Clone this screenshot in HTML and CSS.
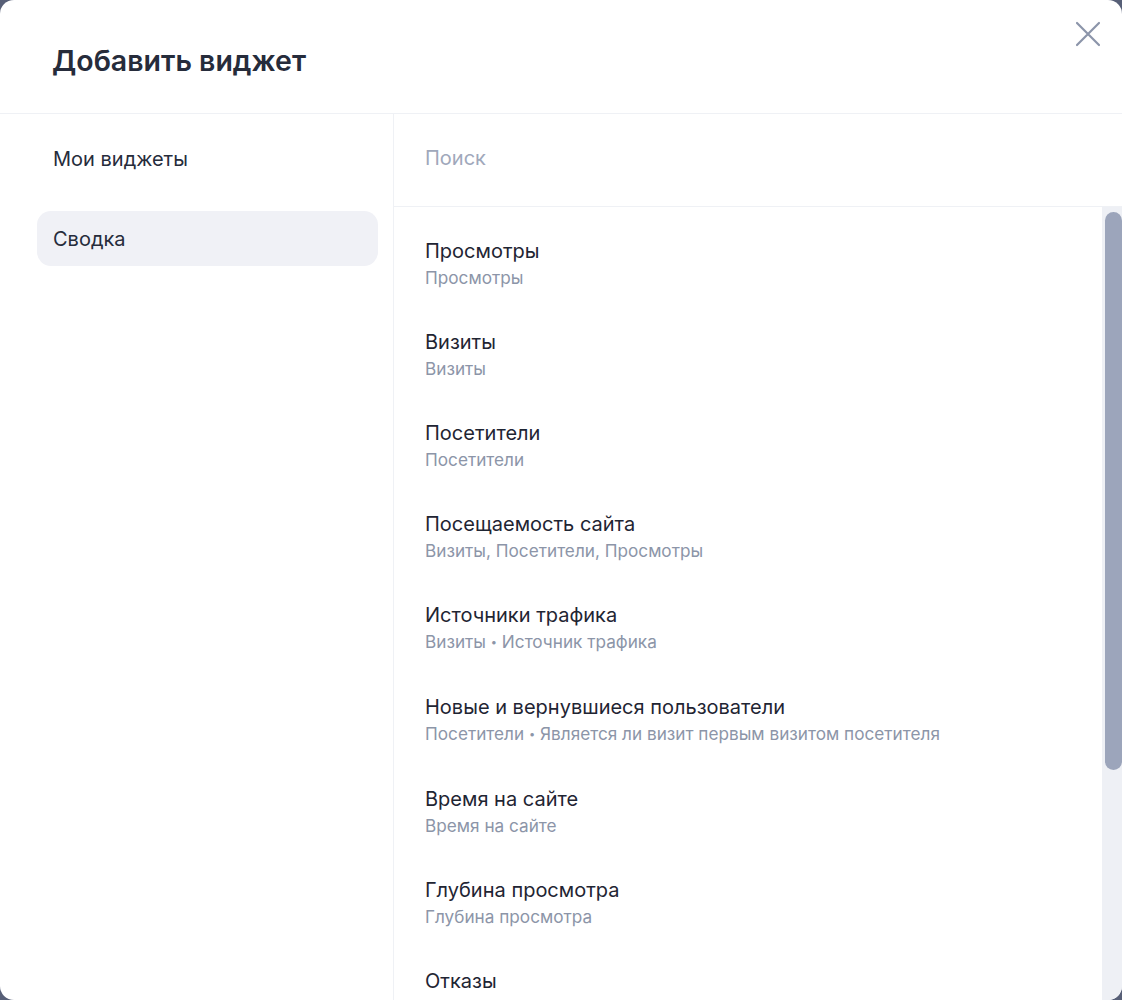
FILE: index.html
```html
<!DOCTYPE html>
<html lang="ru">
<head>
  <meta charset="UTF-8">
  <title>Добавить виджет</title>
  <link rel="stylesheet" href="styles.css">
</head>
<body>
  <div class="modal">
    <div class="modal-header">
      <h2>Добавить виджет</h2>
      <button class="close" aria-label="Закрыть">
        <svg width="26" height="26" viewBox="0 0 26 26"><path d="M2 2L24 24M24 2L2 24" stroke="#8c95aa" stroke-width="2.2" stroke-linecap="round"/></svg>
      </button>
    </div>
    <div class="modal-body">
      <div class="sidebar">
        <div class="nav-item">Мои виджеты</div>
        <div class="nav-item active">Сводка</div>
      </div>
      <div class="content">
        <div class="search">
          <input type="text" placeholder="Поиск">
        </div>
        <div class="list-wrap">
          <div class="widget-list">
            <div class="widget">
              <div class="widget-title">Просмотры</div>
              <div class="widget-sub">Просмотры</div>
            </div>
            <div class="widget">
              <div class="widget-title">Визиты</div>
              <div class="widget-sub">Визиты</div>
            </div>
            <div class="widget">
              <div class="widget-title">Посетители</div>
              <div class="widget-sub">Посетители</div>
            </div>
            <div class="widget">
              <div class="widget-title">Посещаемость сайта</div>
              <div class="widget-sub">Визиты, Посетители, Просмотры</div>
            </div>
            <div class="widget">
              <div class="widget-title">Источники трафика</div>
              <div class="widget-sub">Визиты <span class="dot">•</span> Источник трафика</div>
            </div>
            <div class="widget">
              <div class="widget-title">Новые и вернувшиеся пользователи</div>
              <div class="widget-sub">Посетители <span class="dot">•</span> Является ли визит первым визитом посетителя</div>
            </div>
            <div class="widget">
              <div class="widget-title">Время на сайте</div>
              <div class="widget-sub">Время на сайте</div>
            </div>
            <div class="widget">
              <div class="widget-title">Глубина просмотра</div>
              <div class="widget-sub">Глубина просмотра</div>
            </div>
            <div class="widget">
              <div class="widget-title">Отказы</div>
              <div class="widget-sub">Отказы</div>
            </div>
            <div class="widget">
              <div class="widget-title">Браузеры</div>
              <div class="widget-sub">Визиты <span class="dot">•</span> Браузер</div>
            </div>
          </div>
          <div class="scrollbar">
            <div class="scrollbar-thumb"></div>
          </div>
        </div>
      </div>
    </div>
  </div>
</body>
</html>
```

FILE: styles.css
```css
html, body {
  margin: 0;
  height: 100%;
}
body {
  background-color: #575f77;
  font-family: 'Inter', 'Noto Sans', sans-serif;
  color: #1f2533;
}
.modal {
  height: 1000px;
  background-color: white;
  border-radius: 14px;
  overflow: hidden;
  display: flex;
  flex-direction: column;
}
.modal-header {
  position: relative;
  height: 106px;
  padding-top: 7px;
  flex-shrink: 0;
  display: flex;
  align-items: center;
  padding-left: 52px;
  border-bottom: 1px solid #eff1f5;
}
.modal-header h2 {
  margin: 0;
  font-size: 28.5px;
  font-weight: 600;
  color: #262c3b;
}
.close {
  position: absolute;
  top: 19px;
  right: 19px;
  width: 30px;
  height: 30px;
  padding: 2px;
  border: none;
  background: none;
  cursor: pointer;
}
.modal-body {
  flex: 1;
  display: flex;
  min-height: 0;
}
.sidebar {
  width: 341px;
  padding: 17px 15px 0 37px;
  border-right: 1px solid #eff1f5;
  display: flex;
  flex-direction: column;
  gap: 25px;
}
.nav-item {
  height: 55px;
  display: flex;
  align-items: center;
  padding-left: 16px;
  border-radius: 14px;
  font-size: 20px;
  color: #262c3b;
  cursor: pointer;
}
.nav-item.active {
  background-color: #f0f1f6;
}
.content {
  flex: 1;
  display: flex;
  flex-direction: column;
  min-width: 0;
}
.search {
  height: 88px;
  padding-bottom: 4px;
  flex-shrink: 0;
  border-bottom: 1px solid #eff1f5;
  display: flex;
  align-items: center;
}
.search input {
  width: 100%;
  border: none;
  outline: none;
  padding: 0 31px;
  font-family: inherit;
  font-size: 20px;
  color: #1f2533;
  background: transparent;
}
.search input::placeholder {
  color: #a0a8bb;
}
.list-wrap {
  flex: 1;
  position: relative;
  min-height: 0;
}
.widget-list {
  height: 100%;
  overflow: hidden;
  padding-top: 11px;
  padding-right: 20px;
  box-sizing: border-box;
}
.scrollbar {
  position: absolute;
  top: 0;
  right: 0;
  bottom: 0;
  width: 20px;
  background-color: #eef0f5;
}
.scrollbar-thumb {
  margin: 5px 0 0 3px;
  height: 558px;
  background-color: #9ca5bb;
  border-radius: 12px;
}
.widget {
  padding: 20px 31px 18px;
  cursor: pointer;
}
.widget-title {
  font-size: 20px;
  line-height: 26px;
  color: #1f2533;
}
.widget-sub {
  font-size: 17.2px;
  line-height: 27px;
  color: #8c95a8;
}
.dot {
  font-size: 11px;
  vertical-align: 2px;
}
```
